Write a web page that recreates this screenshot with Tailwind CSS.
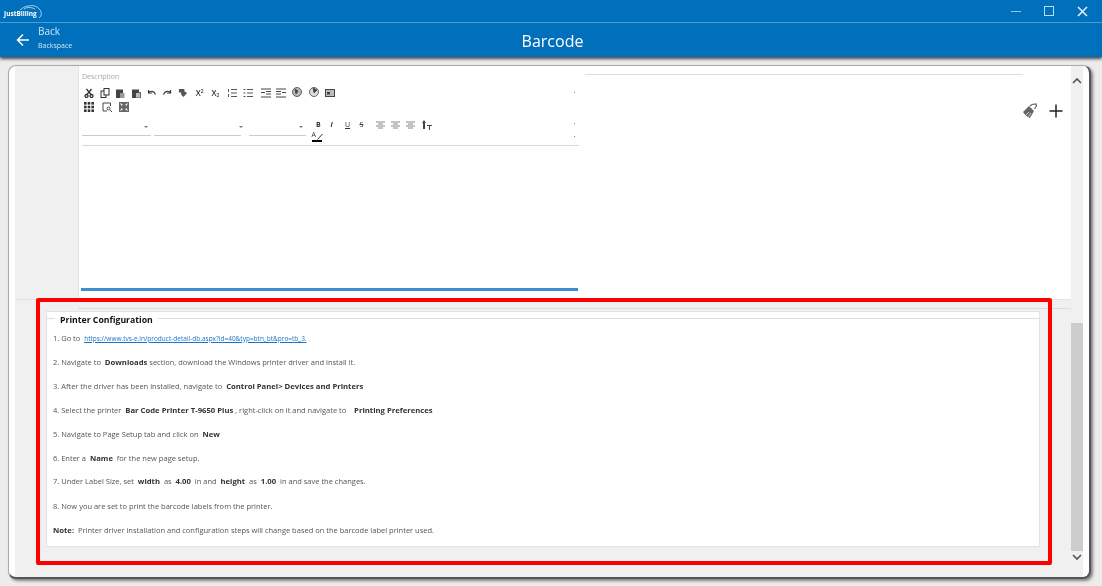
<!DOCTYPE html>
<html lang="en">
<head>
    <meta charset="UTF-8">
    <title>Barcode</title>
    <script src="https://cdn.jsdelivr.net/npm/@tailwindcss/browser@4"></script>
</head>
<body class="w-[1102px] h-[586px] overflow-hidden bg-[#ececec] relative font-['Open_Sans',sans-serif]">
    <!-- header -->
    <div class="bg-[#0070bc] h-[57px] shadow-[0_2px_3px_rgba(0,0,0,0.7)] relative z-10 blur-[0.3px]">
        <div class="h-[23px] border-b border-[#4a9bd2] flex items-center justify-between pl-[4px] pr-[14px]">
            <div class="relative w-[36px] h-[20px] flex items-end">
                <span class="text-[6.500px] font-bold text-white leading-[13px] pb-[1px]">JustBilling</span>
                <svg class="absolute left-[14px] top-[3px]" width="26" height="14" viewBox="0 0 26 14" fill="none" stroke="#cfe5f5" stroke-width="0.8"><path d="M2 6C6 3 8 2 11 2C15 1 19 2 21 5C24 7 24 12 21 14"/><path d="M6 5C9 3 13 3 17 5"/></svg>
            </div>
            <div class="flex items-center gap-[23px]">
                <div class="w-[10px] h-px bg-[#8fc3e6]"></div>
                <div class="w-[10px] h-[10px] border border-[#bcdcf1]"></div>
                <svg width="11" height="11" viewBox="0 0 11 11" stroke="#e8f3fa" stroke-width="1.5"><path d="M1 1L10 10M10 1L1 10"/></svg>
            </div>
        </div>
        <div class="h-[34px] flex items-center relative">
            <svg class="ml-[16px]" width="14" height="14" viewBox="0 0 14 14" fill="none" stroke="white" stroke-width="1.5"><path d="M13 7H1.5M7 1.5L1.5 7L7 12.5"/></svg>
            <div class="ml-[8px] text-[#cfe5f5] pb-[4px]">
                <div class="text-[10px] leading-[15px]">Back</div>
                <div class="text-[7px] leading-[14px]">Backspace</div>
            </div>
            <div class="absolute inset-x-0 top-[7px] text-center text-white text-[16px] leading-[22px] pl-[3px]">Barcode</div>
        </div>
    </div>

    <!-- card -->
    <div class="absolute left-[8px] top-[65px] w-[1083px] h-[514px] bg-white rounded-[8px] border-t border-l border-[#aaa] border-r-2 border-b-2 border-r-[#555] border-b-[#555] shadow-[2px_2px_3px_rgba(0,0,0,0.45)] flex pl-[6px] pr-[6px] overflow-hidden blur-[0.3px]">
        <div class="flex-1 flex flex-col min-w-0">
            <!-- editor part -->
            <div class="h-[234px] flex border-b border-[#e2e2e2] bg-white">
                <div class="w-[63px] bg-[#f0f0f0]"></div>
                <div class="w-[501px] border-l border-[#e5e5e5] pl-[3px] relative">
                    <div class="text-[7px] text-[#a8a8a8] leading-[10px] pt-[6px]">Description</div>
                    <!-- toolbar -->
                    <div class="flex flex-wrap items-center gap-x-[5.700px] gap-y-[4px] w-[266px] mt-[5px] text-[#444] h-[27px] content-start pl-[2px]">
                        <svg width="10" height="10" viewBox="0 0 10 10" fill="none" stroke="#333" stroke-width="1.300"><circle cx="2.500" cy="8" r="1.500"/><circle cx="7.500" cy="8" r="1.500"/><path d="M3 6.500L7.500 1M7 6.500L2.500 1"/></svg>
                        <svg width="10" height="10" viewBox="0 0 10 10" fill="#fff" stroke="#333"><rect x="1" y="3" width="5" height="6.500"/><rect x="4" y="0.500" width="5" height="6.500"/></svg>
                        <svg width="10" height="10" viewBox="0 0 10 10" fill="#444"><rect x="1" y="1.500" width="7" height="8.500"/><rect x="5" y="5" width="4.500" height="5" fill="#999"/></svg>
                        <svg width="10" height="10" viewBox="0 0 10 10" fill="#444"><rect x="1" y="1.500" width="7" height="8.500"/><rect x="4.500" y="4.500" width="5" height="5.500" fill="#bbb" stroke="#333" stroke-width="0.700"/></svg>
                        <svg width="10" height="10" viewBox="0 0 10 10" fill="none" stroke="#333" stroke-width="1.200"><path d="M1.500 2V5H5M1.500 5C3 2.500 7 2.500 8.500 6.500"/></svg>
                        <svg width="10" height="10" viewBox="0 0 10 10" fill="none" stroke="#333" stroke-width="1.200"><path d="M8.500 2V5H5M8.500 5C7 2.500 3 2.500 1.500 6.500"/></svg>
                        <svg width="10" height="10" viewBox="0 0 11 10" fill="#555"><path d="M1 0.500H7V3L10 5L6 9.500L3.500 7V4.500H1Z"/></svg>
                        <span class="ml-[2px] text-[8px] leading-[10px] font-semibold w-[10px] text-[#333]">X<sup class="text-[5px]">2</sup></span>
                        <span class="text-[8px] leading-[10px] font-semibold w-[10px] text-[#333]">X<sub class="text-[5px]">2</sub></span>
                        <svg width="10" height="10" viewBox="0 0 10 10" stroke="#555"><path d="M1.500 1V4M1.500 6V9M4 1.500H10M4 5H10M4 8.500H10"/></svg>
                        <svg width="10" height="10" viewBox="0 0 10 10" stroke="#555"><path d="M0.500 1.500H2.500M0.500 5H2.500M0.500 8.500H2.500M4 1.500H10M4 5H10M4 8.500H10"/></svg>
                        <svg class="ml-[2px]" width="10" height="10" viewBox="0 0 10 10" stroke="#444"><path d="M0 1H10M5 3.500H10M5 6H10M0 9H10M0 4.500H4"/></svg>
                        <svg width="10" height="10" viewBox="0 0 10 10" stroke="#444"><path d="M0 1H10M0 3.500H5M0 6H5M0 9H10M6 4.500H10"/></svg>
                        <svg width="11" height="11" viewBox="0 0 11 11" fill="#bbb" stroke="#444" stroke-width="0.800"><circle cx="5" cy="5" r="4.500"/><path d="M3 2L6 4L4 7Z" fill="#444"/></svg>
                        <svg width="11" height="11" viewBox="0 0 11 11" fill="#ddd" stroke="#444" stroke-width="0.800"><circle cx="5" cy="5" r="4.500"/><path d="M4 1L8 3L5 6Z" fill="#444"/></svg>
                        <svg width="10" height="10" viewBox="0 0 10 10" fill="#bbb" stroke="#444"><rect x="0.500" y="1.500" width="9" height="7"/><rect x="2" y="4" width="3" height="2.500" fill="#444" stroke="none"/></svg>
                        <svg width="10" height="10" viewBox="0 0 10 10" fill="#333"><rect width="2.600" height="2.600"/><rect x="3.700" width="2.600" height="2.600"/><rect x="7.400" width="2.600" height="2.600"/><rect y="3.700" width="2.600" height="2.600"/><rect x="3.700" y="3.700" width="2.600" height="2.600"/><rect x="7.400" y="3.700" width="2.600" height="2.600"/><rect y="7.400" width="2.600" height="2.600"/><rect x="3.700" y="7.400" width="2.600" height="2.600"/><rect x="7.400" y="7.400" width="2.600" height="2.600"/></svg>
                        <svg class="ml-[2px]" width="10" height="10" viewBox="0 0 10 10" fill="none" stroke="#444"><path d="M8.500 4V1H1V9H5"/><circle cx="6.500" cy="6.500" r="1.500"/><path d="M8 8L10 10"/></svg>
                        <svg class="ml-[2px]" width="10" height="10" viewBox="0 0 10 10" fill="#666"><rect width="10" height="10"/><path d="M1 1L4 2.500L2.500 4ZM9 1L6 2.500L7.500 4ZM1 9L4 7.500L2.500 6ZM9 9L6 7.500L7.500 6Z" fill="#eee"/></svg>
                    </div>
                    <!-- second toolbar row -->
                    <div class="flex mt-[3px] h-[28px] items-start">
                        <div class="w-[69px] h-[19px] border-b border-[#ccc] relative"><span class="absolute right-[3px] top-[9px] border-x-[2px] border-t-[2px] border-x-transparent border-t-[#777]"></span></div>
                        <div class="w-[87px] h-[19px] ml-[3px] border-b border-[#ccc] relative"><span class="absolute right-[-2px] top-[9px] border-x-[2px] border-t-[2px] border-x-transparent border-t-[#777]"></span></div>
                        <div class="w-[57px] h-[19px] ml-[8px] border-b border-[#ccc] relative"><span class="absolute right-[3px] top-[9px] border-x-[2px] border-t-[2px] border-x-transparent border-t-[#777]"></span></div>
                        <div class="ml-[10px] mt-[2px] flex flex-wrap items-center gap-x-[8.500px] w-[125px] text-[#333] text-[7px] leading-[12px]">
                            <span class="font-bold w-[6px]">B</span>
                            <span class="italic font-bold w-[6px]">I</span>
                            <span class="underline w-[6px]">U</span>
                            <span class="line-through w-[6px]">S</span>
                            <svg class="ml-[1.500px]" width="9" height="8" viewBox="0 0 9 8" stroke="#888"><path d="M0 1H9M2 3H7M0 5H9M2 7H7"/></svg>
                            <svg class="-ml-[2.500px]" width="9" height="8" viewBox="0 0 9 8" stroke="#888"><path d="M0 1H9M2 3H7M0 5H9M2 7H7"/></svg>
                            <svg class="-ml-[2.500px]" width="9" height="8" viewBox="0 0 9 8" stroke="#888"><path d="M0 1H9M2 3H7M0 5H9M2 7H7"/></svg>
                            <svg class="-ml-[1px]" width="10" height="10" viewBox="0 0 10 10" fill="#444"><path d="M2 0L4 3H3V9H1V3H0ZM5 5H10V6H8V10H7V6H5Z"/></svg>
                            <span class="-ml-[4.500px] w-[11px] h-[12px] flex flex-col items-start text-[7px] leading-[8px] text-[#333] relative">A<span class="w-[10px] h-[2px] bg-black mt-[1px]"></span><svg class="absolute left-[5px] top-[2px]" width="6" height="7" viewBox="0 0 6 7" fill="none" stroke="#333"><path d="M0.500 6.500L5.500 1"/></svg></span>
                        </div>
                    </div>
                    <div class="h-px bg-[#d8d8d8] w-[497px]"></div>
                    <div class="absolute left-[2px] bottom-[8px] w-[497px] h-[3px] bg-[#3a8fd0]"></div>
                    <span class="absolute right-[4px] top-[26px] w-px h-px bg-[#888]"></span>
                    <span class="absolute right-[4px] top-[57px] w-px h-px bg-[#888]"></span>
                    <span class="absolute right-[4px] top-[70px] w-px h-px bg-[#888]"></span>
                </div>
                <div class="flex-1 relative">
                    <div class="ml-[6px] mt-[8px] w-[438px] h-px bg-[#ddd]"></div>
                    <svg class="absolute left-[443px] top-[37px]" width="16" height="16" viewBox="0 0 16 16"><path d="M1 9L7 3L12 8L8 15C5 14 3 12 1 9Z" fill="#666"/><path d="M4 12L7 9M6.500 13.500L9 10" stroke="#fff" stroke-width="0.700"/><path d="M8 3L10 1.500L14 1L14.500 3L12.500 6" fill="none" stroke="#666" stroke-width="1.200"/></svg>
                    <svg class="absolute left-[469px] top-[37px]" width="16" height="16" viewBox="0 0 16 16" stroke="#222" stroke-width="1.500"><path d="M8 1.500V14.500M1.500 8H14.500"/></svg>
                </div>
            </div>
            <!-- printer configuration -->
            <div class="flex-1 bg-[#f0f0f0] pt-[11px] pl-[31px] pr-[31px] relative">
                <div class="absolute left-[63px] right-0 top-[8px] h-px bg-[#dcdcdc]"></div>
                <div class="bg-white h-[236px] border border-[#e2e2e2] relative text-[7.500px] text-[#555]">
                    <div class="absolute top-[6px] left-0 right-0 h-px bg-[#ddd]"></div>
                    <div class="absolute top-[3px] left-[8px] px-[5px] bg-white text-[8.700px] font-bold text-[#111] leading-[11px]">Printer Configuration</div>
                    <div class="absolute left-[6px] top-[14px] leading-[24px] w-[900px]">
                        <div>1. Go to&nbsp; <a class="text-[#1a73c8] underline text-[6.500px]">https://www.tvs-e.in/product-detail-db.aspx?id=40&amp;typ=btn_bt&amp;pro=tb_3.</a></div>
                        <div class="-mt-px">2. Navigate to&nbsp; <b class="text-[#333] text-[7.700px]">Downloads</b> section, download the Windows printer driver and install it.</div>
                        <div>3. After the driver has been installed, navigate to&nbsp; <b class="text-[#333] text-[7.700px]">Control Panel&gt; Devices and Printers</b></div>
                        <div>4. Select the printer&nbsp; <b class="text-[#333] text-[7.700px]">Bar Code Printer T-9650 Plus</b> , right-click on it and navigate to&nbsp;&nbsp;&nbsp;<b class="text-[#333] text-[7.700px] ml-[2px]">Printing Preferences</b></div>
                        <div>5. Navigate to Page Setup tab and click on&nbsp; <b class="text-[#333] text-[7.700px]">New</b></div>
                        <div>6. Enter a&nbsp; <b class="text-[#333] text-[7.700px]">Name</b>&nbsp; for the new page setup.</div>
                        <div class="-mt-px">7. Under Label Size, set&nbsp; <b class="text-[#333] text-[7.700px]">width</b>&nbsp; as&nbsp; <b class="text-[#333] text-[7.700px]">4.00</b>&nbsp; in and&nbsp; <b class="text-[#333] text-[7.700px]">height</b>&nbsp; as&nbsp; <b class="text-[#333] text-[7.700px]">1.00</b>&nbsp; in and save the changes.</div>
                        <div class="mt-px">8. Now you are set to print the barcode labels from the printer.</div>
                        <div><b class="text-[#333] text-[7.700px]">Note:</b>&nbsp; Printer driver installation and configuration steps will change based on the barcode label printer used.</div>
                    </div>
                </div>
            </div>
        </div>
        <!-- scrollbar -->
        <div class="w-[12px] bg-[#f0f0f0] flex flex-col items-center relative">
            <svg class="mt-[11px]" width="10" height="7" viewBox="0 0 10 7" fill="none" stroke="#555" stroke-width="1.600"><path d="M1 6L5 2L9 6"/></svg>
            <div class="absolute left-0 right-0 top-[257px] h-[228px] bg-[#cdcdcd]"></div>
            <svg class="absolute top-[488px]" width="10" height="7" viewBox="0 0 10 7" fill="none" stroke="#555" stroke-width="1.600"><path d="M1 1L5 5L9 1"/></svg>
        </div>
    </div>

    <!-- red highlight -->
    <div class="absolute z-20 left-[36px] top-[298px] w-[1016px] h-[267px] border-[4px] border-[#ff0000] rounded-[2px]"></div>
</body>
</html>
